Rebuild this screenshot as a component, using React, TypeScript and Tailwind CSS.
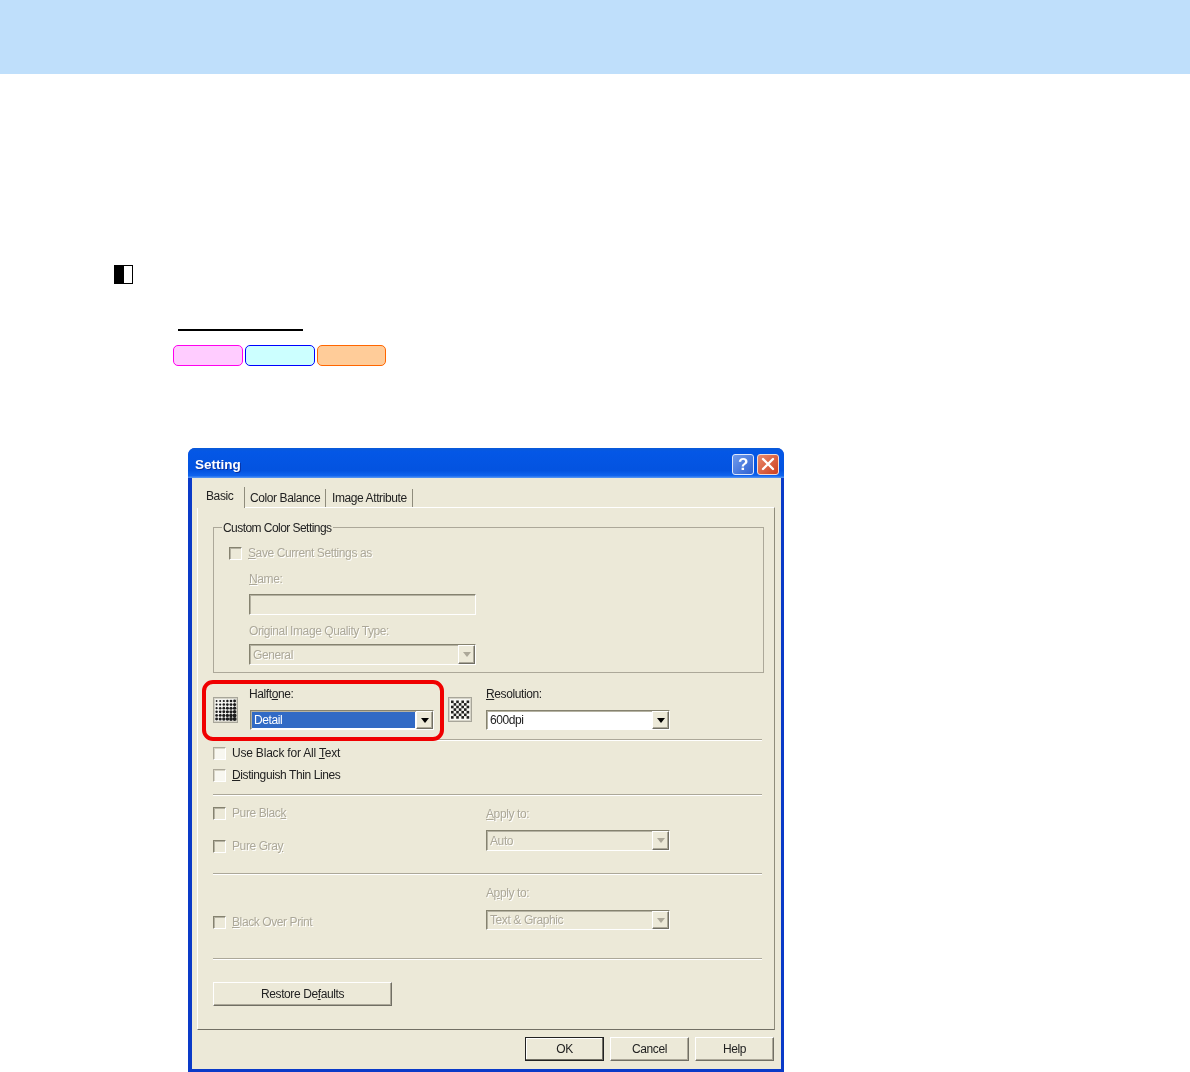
import React from "react";

const disabledText = "text-[#aca899] [text-shadow:1px_1px_0_#fff]";

function Raised({ className, children }: { className: string; children?: React.ReactNode }) {
  return (
    <div className={`border border-t-white border-l-white border-b-[#716f64] border-r-[#716f64] bg-[#ece9d8] shadow-[inset_-1px_-1px_0_#aca899] ${className}`}>
      {children}
    </div>
  );
}

function Label({ children, disabled, className = "" }: { children: React.ReactNode; disabled?: boolean; className?: string }) {
  return (
    <div className={`h-[14px] leading-[14px] text-[12px] whitespace-nowrap ${disabled ? disabledText : "text-[#222]"} ${className}`}>
      {children}
    </div>
  );
}

function Check({ children, disabled, className = "" }: { children: React.ReactNode; disabled?: boolean; className?: string }) {
  return (
    <div className={`flex items-center gap-[6px] h-[14px] ${className}`}>
      <div
        className={`w-[13px] h-[13px] border ${
          disabled
            ? "border-t-[#85826f] border-l-[#85826f] border-b-white border-r-white bg-[#ece9d8] shadow-[inset_1px_1px_0_#b5b2a2]"
            : "border-t-[#aca899] border-l-[#aca899] border-b-white border-r-white bg-[#f8f7f0] shadow-[inset_1px_1px_0_#d8d5c6]"
        }`}
      />
      <Label disabled={disabled}>{children}</Label>
    </div>
  );
}

function Select({
  value,
  disabled,
  selected,
  className,
}: {
  value: string;
  disabled?: boolean;
  selected?: boolean;
  className: string;
}) {
  return (
    <div
      className={`flex border border-t-[#85826f] border-l-[#85826f] border-b-white border-r-white shadow-[inset_1px_1px_0_#b5b2a2] ${
        disabled ? "bg-[#ece9d8]" : "bg-white"
      } ${className}`}
    >
      <div className="flex-1 min-w-0 p-px">
        <div
          className={`h-full pl-[2px] flex items-center text-[12px] ${
            selected ? "bg-[#316ac5] text-white" : disabled ? disabledText : "text-[#222]"
          }`}
        >
          {value}
        </div>
      </div>
      <Raised className="w-[17px] flex items-center justify-center">
        <div
          className={`w-0 h-0 border-x-[4px] border-x-transparent border-t-[5px] ${
            disabled ? "border-t-[#aca899]" : "border-t-black"
          }`}
        />
      </Raised>
    </div>
  );
}

function Separator() {
  return <div className="h-[2px] w-[549px] border-t border-[#aca899] border-b-white border-b" />;
}

function HalftoneIcon() {
  const dots = [];
  for (let y = 0; y < 6; y++) {
    for (let x = 0; x < 6; x++) {
      const r = 0.9 + ((x + y) / 10) * 1.1;
      dots.push(<circle key={`${x}-${y}`} cx={3.6 + x * 3.6} cy={4 + y * 3.6} r={r} fill="#1c1c1c" />);
    }
  }
  return (
    <svg width="25" height="26" viewBox="0 0 25 26" className="shrink-0 mt-[10px]">
      <rect x="0.5" y="0.5" width="24" height="25" fill="#d6d4c8" stroke="#a8a69a" />
      <rect x="2" y="2" width="21" height="22" fill="#f4f4f0" />
      {dots}
    </svg>
  );
}

function CheckerIcon() {
  const cells = [];
  for (let y = 0; y < 7; y++) {
    for (let x = 0; x < 7; x++) {
      if ((x + y) % 2 === 0) cells.push(<rect key={`${x}-${y}`} x={3 + x * 2.6} y={3.5 + y * 2.6} width="2.6" height="2.6" fill="#1f1f1f" />);
    }
  }
  return (
    <svg width="24" height="25" viewBox="0 0 24 25" className="shrink-0 mt-[10px]">
      <rect x="0.5" y="0.5" width="23" height="24" fill="#d6d4c8" stroke="#a8a69a" />
      <rect x="2" y="2" width="20" height="21" fill="#f6f6f2" />
      {cells}
    </svg>
  );
}

export default function App() {
  return (
    <div className="relative h-[1072px] w-full overflow-hidden bg-white font-['Liberation_Sans',Arial,sans-serif]">
      <div className="h-[74px] bg-[#bfdffb]" />
      <div className="mt-[191px] ml-[114px] w-[19px] h-[19px] border border-black flex">
        <div className="w-[9px] bg-black" />
      </div>
      <div className="mt-[45px] ml-[178px] w-[125px] h-[2px] bg-black" />
      <div className="mt-[14px] ml-[173px] flex gap-[2px]">
        <div className="w-[70px] h-[21px] rounded-[5px] border border-[#ff00ee] bg-[#ffccff]" />
        <div className="w-[70px] h-[21px] rounded-[5px] border border-[#0000ff] bg-[#ccffff]" />
        <div className="w-[69px] h-[21px] rounded-[5px] border border-[#ff6600] bg-[#ffcc99]" />
      </div>

      {/* dialog */}
      <div className="mt-[82px] ml-[188px] w-[596px] h-[624px] bg-[#0a3ac8] rounded-t-[7px] overflow-hidden blur-[0.4px] tracking-[-0.4px]">
        <div className="h-[30px] flex items-center pt-[2px] pl-[7px] pr-[5px] bg-[linear-gradient(#0a5ad8,#0457e6_12%,#0353e0_75%,#0f63ee_92%,#5b9af5)]">
          <div className="flex-1 pt-[3px] text-white font-bold text-[13.5px] tracking-normal [text-shadow:1px_1px_0_#0a2f9c]">Setting</div>
          <div className="w-[22px] h-[21px] rounded-[3px] border border-[#dfe8fb] bg-[linear-gradient(135deg,#6f9bec,#2f62d2)] text-white text-[17px] font-bold leading-[19px] text-center">?</div>
          <div className="ml-[3px] w-[22px] h-[21px] rounded-[3px] border border-[#f3ddd5] bg-[linear-gradient(135deg,#e98a6c,#cd3f1f)] flex items-center justify-center">
            <svg width="14" height="14" viewBox="0 0 14 14">
              <path d="M2 2 L12 12 M12 2 L2 12" stroke="#fff" strokeWidth="2.4" strokeLinecap="round" />
            </svg>
          </div>
        </div>

        <div className="ml-[4px] mr-[3px] h-[591px] bg-[#ece9d8] pl-[5px] pt-[9px]">
          {/* tabs */}
          <div className="flex h-[20px] items-end relative z-10 text-[12px] text-[#222] leading-none whitespace-nowrap">
            <div className="w-[48px] h-[21px] -mb-px pl-[9px] pt-[3px] bg-[#ece9d8] border-r border-[#8f8c7c]">Basic</div>
            <div className="w-[81px] h-[18px] pl-[5px] pt-[3px] border-r border-[#8f8c7c]">Color Balance</div>
            <div className="w-[87px] h-[18px] pl-[6px] pt-[3px] border-r border-[#8f8c7c]">Image Attribute</div>
          </div>

          {/* page */}
          <div className="w-[578px] h-[523px] border border-t-white border-l-white border-b-[#716f64] border-r-[#8f8c7c] pl-[15px] pt-[19px]">
            <div className="relative w-[551px] h-[146px] border border-[#aca899] pl-[15px] pt-[18px]">
              <div className="absolute -top-[7px] left-[8px] px-px bg-[#ece9d8] tracking-[-0.55px]">
                <Label>Custom Color Settings</Label>
              </div>
              <Check disabled>
                <u>S</u>ave Current Settings as
              </Check>
              <div className="pl-[20px]">
                <Label disabled className="mt-[12px]">
                  <u>N</u>ame:
                </Label>
                <div className="mt-[8px] w-[227px] h-[21px] border border-t-[#85826f] border-l-[#85826f] border-b-white border-r-white shadow-[inset_1px_1px_0_#b5b2a2]" />
                <Label disabled className="mt-[9px]">
                  Original Image Quality Type:
                </Label>
                <Select disabled value="General" className="mt-[6px] w-[227px] h-[21px]" />
              </div>
            </div>

            <div className="mt-[14px] flex">
              <HalftoneIcon />
              <div className="ml-[11px] w-[183px]">
                <Label>
                  Halft<u>o</u>ne:
                </Label>
                <Select selected value="Detail" className="mt-[9px] h-[20px] w-[184px] ml-px" />
              </div>
              <div className="ml-[16px]">
                <CheckerIcon />
              </div>
              <div className="ml-[14px] w-[184px]">
                <Label>
                  <u>R</u>esolution:
                </Label>
                <Select value="600dpi" className="mt-[9px] h-[20px] w-[184px]" />
              </div>
            </div>

            <div className="mt-[9px]">
              <Separator />
            </div>
            <Check className="mt-[5px] tracking-[-0.2px]">
              Use Black for All <u>T</u>ext
            </Check>
            <Check className="mt-[8px]">
              <u>D</u>istinguish Thin Lines
            </Check>
            <div className="mt-[12px]">
              <Separator />
            </div>

            <div className="h-[77px] grid grid-cols-[273px_184px]">
              <div>
                <Check disabled className="mt-[10px]">
                  Pure Blac<u>k</u>
                </Check>
                <Check disabled className="mt-[19px]">
                  Pure Gra<u>y</u>
                </Check>
              </div>
              <div>
                <Label disabled className="mt-[11px]">
                  <u>A</u>pply to:
                </Label>
                <Select disabled value="Auto" className="mt-[9px] h-[21px]" />
              </div>
            </div>
            <Separator />

            <div className="h-[83px] grid grid-cols-[273px_184px]">
              <div>
                <Check disabled className="mt-[40px]">
                  <u>B</u>lack Over Print
                </Check>
              </div>
              <div>
                <Label disabled className="mt-[11px]">
                  A<u>p</u>ply to:
                </Label>
                <Select disabled value="Text & Graphic" className="mt-[10px] h-[20px]" />
              </div>
            </div>
            <Separator />

            <Raised className="mt-[22px] w-[179px] h-[24px] flex items-center justify-center text-[12px] text-[#222]">
              <span>
                Restore De<u>f</u>aults
              </span>
            </Raised>
          </div>

          {/* footer */}
          <div className="mt-[7px] w-[577px] flex justify-end gap-[6px] text-[12px] text-[#222]">
            <div className="w-[79px] h-[24px] border border-[#222] shadow-[inset_-1px_-1px_0_#716f64,inset_1px_1px_0_#fff] flex items-center justify-center">OK</div>
            <Raised className="w-[79px] h-[24px] flex items-center justify-center">Cancel</Raised>
            <Raised className="w-[79px] h-[24px] flex items-center justify-center">Help</Raised>
          </div>
        </div>
      </div>

      {/* highlight */}
      <div className="absolute left-[202px] top-[680px] w-[242px] h-[61px] rounded-[11px] border-4 border-[#f00000]" />
    </div>
  );
}
